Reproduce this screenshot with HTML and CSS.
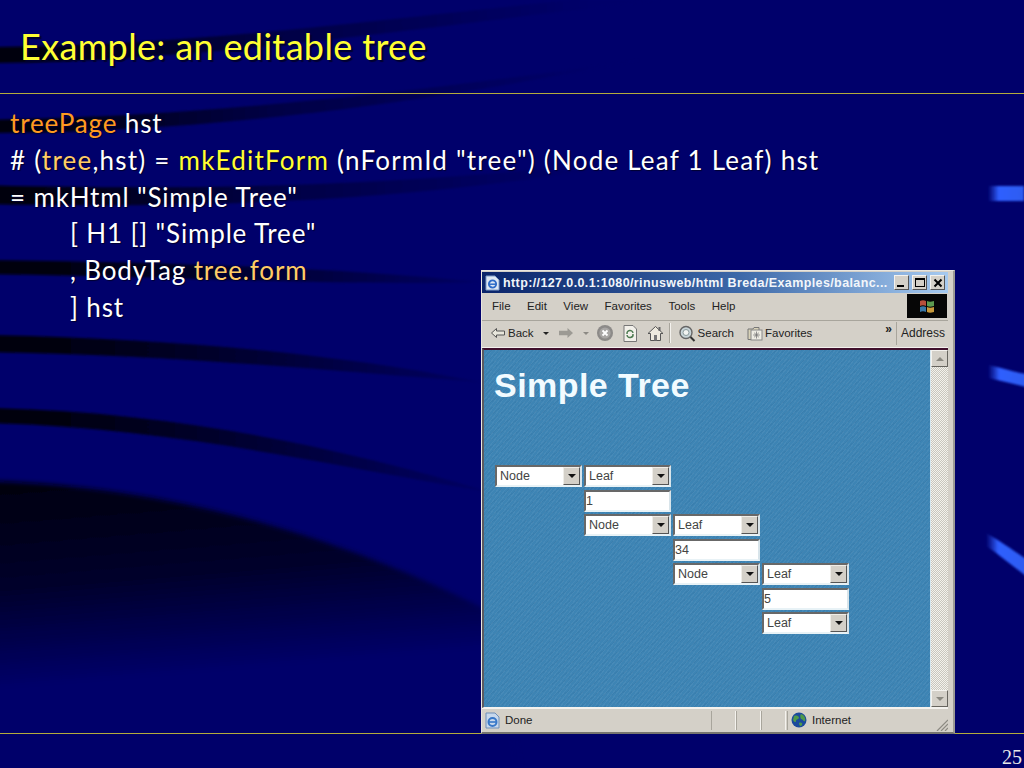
FILE: index.html
```html
<!DOCTYPE html>
<html lang="en">
<head>
<meta charset="utf-8">
<title>Example: an editable tree</title>
<link rel="stylesheet" href="styles.css">
</head>
<body>
<div class="slide">
  <svg class="backdrop" width="1024" height="768" viewBox="0 0 1024 768" aria-hidden="true">
    <defs>
      <linearGradient id="fade" gradientUnits="userSpaceOnUse" x1="0" y1="0" x2="520" y2="0">
        <stop offset="0" stop-color="#000008"/>
        <stop offset="0.1" stop-color="#00000e"/>
        <stop offset="0.5" stop-color="#000034"/>
        <stop offset="1" stop-color="#00006b"/>
      </linearGradient>
      <linearGradient id="fadeLong" gradientUnits="userSpaceOnUse" x1="0" y1="0" x2="600" y2="0">
        <stop offset="0" stop-color="#000008"/>
        <stop offset="0.08" stop-color="#000012"/>
        <stop offset="0.45" stop-color="#000044"/>
        <stop offset="1" stop-color="#00006b"/>
      </linearGradient>
      <linearGradient id="fadeBig" gradientUnits="userSpaceOnUse" x1="0" y1="490" x2="16.5" y2="690">
        <stop offset="0" stop-color="#000010"/>
        <stop offset="0.5" stop-color="#00002c"/>
        <stop offset="1" stop-color="#00006b"/>
      </linearGradient>
      <linearGradient id="flash" x1="0" y1="0" x2="1" y2="0">
        <stop offset="0" stop-color="#2a55ee" stop-opacity="0"/>
        <stop offset="0.3" stop-color="#2f5fff"/>
        <stop offset="1" stop-color="#2f5cf0"/>
      </linearGradient>
      <filter id="soft" x="-5%" y="-30%" width="110%" height="160%"><feGaussianBlur stdDeviation="1.2"/></filter>
      <filter id="softer" x="-5%" y="-5%" width="110%" height="110%"><feGaussianBlur stdDeviation="2.5"/></filter>
    </defs>
    <path d="M-20 47C170 47 360 22 570 0L660 0C400 30 190 63 -20 63Z" fill="url(#fadeLong)" filter="url(#soft)"/>
    <path d="M-20 120C160 118 360 100 640 60C400 108 180 134 -20 133Z" fill="url(#fadeLong)" filter="url(#soft)"/>
    <path d="M-20 185C170 190 420 190 700 150C440 205 190 208 -20 204Z" fill="url(#fadeLong)" filter="url(#soft)"/>
    <path d="M-20 260C170 262 340 268 480 282C340 286 170 276 -20 274Z" fill="url(#fade)" filter="url(#soft)"/>
    <path d="M-20 335C170 338 340 354 480 382C340 372 170 354 -20 352Z" fill="url(#fade)" filter="url(#soft)"/>
    <path d="M-20 408C170 410 340 448 490 492C340 468 170 426 -20 423Z" fill="url(#fade)" filter="url(#soft)"/>
    <path d="M-20 481C170 484 350 540 490 612L520 768L-20 768Z" fill="url(#fadeBig)" filter="url(#softer)"/>
    <path d="M988 186H1024V201H988Z" fill="url(#flash)" filter="url(#soft)"/>
    <path d="M988 365C1002 368 1014 372 1026 374V387C1014 384 1002 381 988 378Z" fill="url(#flash)" filter="url(#soft)"/>
    <path d="M986 533C1002 542 1014 551 1026 559V576C1012 566 1000 555 986 546Z" fill="url(#flash)" filter="url(#soft)"/>
  </svg>

  <header class="slide-head">
    <h1 class="slide-title">Example: an editable tree</h1>
  </header>

  <main class="code">
    <div class="line"><span class="fn">treePage</span> hst</div>
    <div class="line line-wide"># (<span class="ref">tree</span>,hst) = <span class="call">mkEditForm</span> (nFormId "tree") (Node Leaf 1 Leaf) hst</div>
    <div class="line">= mkHtml "Simple Tree"</div>
    <div class="line indent">[ H1 [] "Simple Tree"</div>
    <div class="line indent">, BodyTag <span class="ref">tree.form</span></div>
    <div class="line indent">] hst</div>
  </main>

  <footer class="slide-foot"><span class="page-no">25</span></footer>

  <section class="browser">
    <div class="titlebar">
      <svg class="ie" width="16" height="16" viewBox="0 0 16 16"><path d="M2 1H11L15 5V15H2Z" fill="#dfe8f4" stroke="#7f9cc8"/><circle cx="8.5" cy="9" r="3.6" fill="none" stroke="#2f6cc8" stroke-width="1.9"/><path d="M4.8 9.2H12.2" stroke="#2f6cc8" stroke-width="1.5"/></svg>
      <span class="title-text">http://127.0.0.1:1080/rinusweb/html Breda/Examples/balanc...</span>
      <span class="caps">
        <span class="cap"><i class="min"></i></span>
        <span class="cap"><i class="max"></i></span>
        <span class="cap cap-close"><svg width="10" height="10" viewBox="0 0 10 10"><path d="M1.5 1.5L8.5 8.5M8.5 1.5L1.5 8.5" stroke="#000" stroke-width="2"/></svg></span>
      </span>
    </div>

    <div class="menubar">
      <span class="menu-items"><span>File</span><span>Edit</span><span>View</span><span>Favorites</span><span>Tools</span><span>Help</span></span>
      <span class="flag"><svg width="18" height="16" viewBox="0 0 18 16"><path d="M2 3C4 2 6 2 8 3V8C6 7 4 7 2 8Z" fill="#b8503c"/><path d="M9 3C11 4 13 4 16 3V8C13 9 11 9 9 8Z" fill="#5c9a50"/><path d="M2 9C4 8 6 8 8 9V14C6 13 4 13 2 14Z" fill="#3a78a8"/><path d="M9 9C11 10 13 10 16 9V14C13 15 11 15 9 14Z" fill="#c89a3c"/></svg></span>
    </div>

    <div class="toolbar">
      <span class="tool tool-back">
        <svg width="16" height="12" viewBox="0 0 16 12"><path d="M6.5 1.5L1.5 6L6.5 10.5V8H14.5V4H6.5Z" fill="#e8e6dc" stroke="#555" stroke-width="1"/></svg>
        <span>Back</span><i class="drop"></i>
      </span>
      <span class="tool tool-fwd">
        <svg width="16" height="12" viewBox="0 0 16 12"><path d="M9.5 1L15 6L9.5 11V8.2H1V3.8H9.5Z" fill="#9c9a94"/></svg>
        <i class="drop drop-off"></i>
      </span>
      <svg class="tool-stop" width="18" height="18" viewBox="0 0 18 18"><circle cx="9" cy="9" r="8" fill="#8c8a88"/><circle cx="9" cy="9" r="5.6" fill="#a8a6a4"/><path d="M6.5 6.5L11.5 11.5M11.5 6.5L6.5 11.5" stroke="#fff" stroke-width="1.8"/></svg>
      <svg class="tool-refresh" width="14" height="17" viewBox="0 0 14 17"><path d="M1 .5H10L13.5 4V16.5H1Z" fill="#f2f0ea" stroke="#777"/><path d="M4 9A3 3 0 0 1 10 8M10 9A3 3 0 0 1 4 10" fill="none" stroke="#4c7a50" stroke-width="1.4"/></svg>
      <svg class="tool-home" width="17" height="17" viewBox="0 0 17 17"><path d="M8.5 1.5L1 8.5H3.5V15.5H13.5V8.5H16Z" fill="#eeeade" stroke="#555"/><rect x="7" y="10" width="3" height="5.5" fill="#777"/><rect x="11.5" y="2" width="2" height="4" fill="#666"/></svg>
      <i class="tool-sep"></i>
      <span class="tool tool-search">
        <svg width="18" height="17" viewBox="0 0 18 17"><circle cx="8" cy="7.5" r="6" fill="#c8d4d8" stroke="#666" stroke-width="1.4"/><circle cx="8" cy="7.5" r="3" fill="#f2f4f2" stroke="#8a9a9c"/><path d="M12.5 12L16.5 16" stroke="#333" stroke-width="2"/></svg>
        <span>Search</span>
      </span>
      <span class="tool tool-fav">
        <svg width="16" height="15" viewBox="0 0 16 15"><path d="M1 3H6L7 1.5H12V13.5H1Z" fill="#d8d2b8" stroke="#777"/><rect x="4" y="4" width="11" height="10" fill="#eeece4" stroke="#888"/><path d="M9.5 5.5V12.5M6.2 9H12.8M7.2 6.8L11.8 11.2M11.8 6.8L7.2 11.2" stroke="#777" stroke-width=".8"/></svg>
        <span>Favorites</span>
      </span>
      <span class="chevron">»</span>
      <span class="address">Address</span>
    </div>

    <div class="viewport">
      <div class="page">
        <h2 class="page-title">Simple Tree</h2>
        <div class="tree">
          <div class="sel c1"><span>Node</span><i class="arrow"></i></div>
          <div class="sel c2"><span>Leaf</span><i class="arrow"></i></div>
          <div class="field c2">1</div>
          <div class="sel c2"><span>Node</span><i class="arrow"></i></div>
          <div class="sel c3"><span>Leaf</span><i class="arrow"></i></div>
          <div class="field c3">34</div>
          <div class="sel c3"><span>Node</span><i class="arrow"></i></div>
          <div class="sel c4"><span>Leaf</span><i class="arrow"></i></div>
          <div class="field c4">5</div>
          <div class="sel c4"><span>Leaf</span><i class="arrow"></i></div>
        </div>
      </div>
      <div class="scrollbar">
        <span class="sb-btn"><i class="tri-up"></i></span>
        <span class="sb-track"></span>
        <span class="sb-btn"><i class="tri-down"></i></span>
      </div>
    </div>

    <div class="statusbar">
      <span class="st-main">
        <svg width="17" height="17" viewBox="0 0 17 17"><path d="M2 1H11L15 5V16H2Z" fill="#c8d8ec" stroke="#6f8fb8"/><circle cx="8.5" cy="10" r="4" fill="none" stroke="#3878c8" stroke-width="2"/><path d="M4.5 10H12.5" stroke="#3878c8" stroke-width="1.6"/></svg>
        <span>Done</span>
      </span>
      <span class="st-cell"></span><span class="st-cell"></span><span class="st-cell"></span>
      <span class="st-zone">
        <svg width="16" height="16" viewBox="0 0 16 16"><circle cx="8" cy="8" r="7.5" fill="#1c4a9c"/><path d="M3 4C6 3 8 4 8 6C7 8 5 7 5 9C5 11 3 10 2 8ZM10 2C13 3 15 6 14 9C12 10 12 7 10 7C9 5 9 3 10 2ZM8 11C10 10 12 11 11 13C10 15 8 14 8 11Z" fill="#4f9a48"/></svg>
        <span>Internet</span>
      </span>
      <svg class="grip" width="13" height="13" viewBox="0 0 13 13"><path d="M2 13L13 2M6 13L13 6M10 13L13 10" stroke="#8c8a82" stroke-width="1.2"/></svg>
    </div>
  </section>
</div>
</body>
</html>
```
FILE: styles.css
```css
* { box-sizing: border-box; }
html, body { margin: 0; padding: 0; }
body { width: 1024px; height: 768px; overflow: hidden; background: #00006b; }

.slide {
  position: relative;
  width: 1024px;
  height: 768px;
  display: flex;
  flex-direction: column;
  overflow: hidden;
  background: #00006b;
  font-family: "Lato", "Noto Sans", sans-serif;
  color: #fff;
}
.backdrop { position: absolute; left: 0; top: 0; }

.slide-head {
  position: relative;
  height: 94px;
  padding: 25px 0 0 20px;
  border-bottom: 1px solid #b4ac3c;
}
.slide-title {
  margin: 0;
  font-size: 36px;
  line-height: 42px;
  font-weight: 400;
  letter-spacing: .35px;
  color: #ffff33;
  text-shadow: 2px 2px 1px #000030;
}

.code {
  position: relative;
  flex: 1;
  padding: 11px 0 0 10px;
  font-size: 26px;
  line-height: 36.8px;
  letter-spacing: .85px;
  text-shadow: 1px 1px 1px #000030;
}
.line { white-space: pre; }
.line-wide { letter-spacing: 1.22px; }
.indent { padding-left: 60px; }
.fn { color: #ff9a1f; }
.ref { color: #ffcc66; }
.call { color: #ffff33; }

.slide-foot {
  position: relative;
  height: 35px;
  flex: none;
  border-top: 1px solid #b4ac3c;
  display: flex;
  justify-content: flex-end;
  padding: 12px 2px 0 0;
}
.page-no {
  font-family: "Liberation Serif", serif;
  font-size: 20px;
  line-height: 22px;
  color: #e8e8e8;
}

.browser {
  position: absolute;
  left: 481px;
  top: 270px;
  width: 474px;
  height: 464px;
  padding: 1px 5px 0 0;
  display: flex;
  flex-direction: column;
  background: #d4d0c8;
  border: 1px solid #e8e6e0;
  border-right: 2px solid #9c9a94;
  border-bottom: 2px solid #77756f;
  font-family: "Liberation Sans", sans-serif;
  font-size: 12px;
  color: #222;
}

.titlebar {
  height: 21px;
  flex: none;
  display: flex;
  align-items: center;
  padding: 0 3px 0 2px;
  background: linear-gradient(90deg, #0a246a 0%, #3c68a8 55%, #a6caf0 100%);
}
.ie { flex: none; margin-right: 3px; }
.title-text {
  flex: 1;
  color: #f2f6fa;
  font-weight: 700;
  font-size: 12.5px;
  letter-spacing: .39px;
  white-space: nowrap;
  overflow: hidden;
}
.caps { display: flex; gap: 3px; flex: none; }
.cap {
  width: 15px;
  height: 15px;
  position: relative;
  display: flex;
  align-items: center;
  justify-content: center;
  background: #d4d0c8;
  border: 1px solid;
  border-color: #f4f2ee #555 #555 #f4f2ee;
}
.min { width: 7px; height: 2px; background: #000; align-self: flex-end; margin-bottom: 2px; margin-right: 3px; }
.max { width: 10px; height: 9px; border: 1px solid #000; border-top-width: 2px; }

.menubar {
  height: 27px;
  flex: none;
  margin-top: 1px;
  padding-bottom: 2px;
  display: flex;
  align-items: center;
  justify-content: space-between;
  border-bottom: 1px solid #a8a59c;
}
.menu-items { display: flex; gap: 16.5px; padding-left: 10px; font-size: 11.5px; }
.flag {
  width: 40px;
  height: 24px;
  margin-right: 1px;
  display: flex;
  align-items: center;
  justify-content: center;
  background: #060606;
}

.toolbar {
  height: 27px;
  flex: none;
  padding: 0 0 2px 8px;
  display: flex;
  align-items: center;
  border-bottom: 1px solid #f4f2ee;
  font-size: 11.5px;
}
.tool { display: flex; align-items: center; gap: 2px; flex: none; }
.drop {
  width: 0;
  height: 0;
  margin-left: 7px;
  border: 3px solid transparent;
  border-top: 3px solid #222;
  border-bottom: 0;
}
.drop-off { border-top-color: #8c8a84; }
.tool-fwd { margin-left: 9px; }
.tool-stop { margin-left: 7px; flex: none; }
.tool-refresh { margin-left: 9px; flex: none; }
.tool-home { margin-left: 10px; flex: none; }
.tool-sep { width: 1px; height: 20px; background: #a8a59c; margin-left: 5px; flex: none; box-shadow: 1px 0 #f4f2ee; }
.tool-search { margin-left: 8px; }
.tool-fav { margin-left: 13px; }
.chevron { margin-left: auto; margin-right: 4px; margin-top: -8px; font-weight: 700; font-size: 12px; }
.address {
  width: 52px;
  flex: none;
  height: 23px;
  padding: 4px 0 0 4px;
  border-left: 1px solid #a8a59c;
  font-size: 12px;
}

.viewport {
  flex: 1;
  min-height: 0;
  display: flex;
  border-top: 2px solid #40102c;
  border-left: 2px solid #5c5a60;
  border-bottom: 1px solid #f4f2ee;
}
.page {
  flex: 1;
  padding: 17px 0 0 11px;
  background-color: #3d84b4;
  background-image:
    repeating-linear-gradient(-52deg, rgba(255,255,255,.05) 0 1px, transparent 1px 3px),
    repeating-linear-gradient(-38deg, rgba(0,30,70,.05) 0 1px, transparent 1px 5px);
}
.page-title {
  margin: 0 0 0 -1px;
  height: 98px;
  font-size: 34px;
  line-height: 36px;
  font-weight: 700;
  color: #f2fbff;
  letter-spacing: .45px;
}
.tree {
  display: grid;
  grid-template-columns: 89px 89px 89px 89px;
  grid-auto-rows: 22px;
  row-gap: 2.5px;
  align-items: stretch;
}
.c1 { grid-column: 1; }
.c2 { grid-column: 2; }
.c3 { grid-column: 3; }
.c4 { grid-column: 4; }
.sel, .field {
  width: 87px;
  background: #fff;
  border: 2px solid;
  border-color: #686868 #d8e4ea #e8f2f6 #686868;
  color: #444;
  font-size: 12.5px;
  line-height: 18px;
  display: flex;
  align-items: center;
}
.sel { padding-left: 3px; justify-content: space-between; }
.field { padding-left: 0; }
.arrow {
  width: 17px;
  height: 18px;
  flex: none;
  position: relative;
  background: #d4d0c8;
  border: 1px solid;
  border-color: #efede8 #555 #555 #efede8;
}
.arrow::after {
  content: "";
  position: absolute;
  left: 4px;
  top: 6px;
  border: 4px solid transparent;
  border-top: 4px solid #111;
  border-bottom: 0;
}

.scrollbar {
  width: 18px;
  flex: none;
  display: flex;
  flex-direction: column;
  border-left: 1px solid #d8e8f0;
  background: #f2f0ea;
}
.sb-btn {
  height: 17px;
  flex: none;
  display: flex;
  align-items: center;
  justify-content: center;
  background: #d4d0c8;
  border: 1px solid;
  border-color: #f4f2ee #66645e #66645e #f4f2ee;
}
.tri-up { border: 4px solid transparent; border-bottom: 4px solid #8a8880; border-top: 0; }
.tri-down { border: 4px solid transparent; border-top: 4px solid #8a8880; border-bottom: 0; }
.sb-track {
  flex: 1;
  background-color: #f4f2ec;
  background-image: conic-gradient(#c8c6be 25%, transparent 0 50%, #c8c6be 0 75%, transparent 0);
  background-size: 2px 2px;
}

.statusbar {
  height: 24px;
  flex: none;
  padding-bottom: 1px;
  display: flex;
  align-items: center;
  font-size: 11.5px;
  border-top: 1px solid #f4f2ee;
}
.st-main { width: 229px; display: flex; align-items: center; gap: 4px; padding-left: 2px; flex: none; }
.st-cell { width: 25px; height: 19px; flex: none; border-left: 1px solid #a8a59c; border-right: 1px solid #f4f2ee; }
.st-zone { display: flex; align-items: center; gap: 5px; margin-left: 1px; padding-left: 3px; flex: 1; border-left: 1px solid #a8a59c; height: 19px; }
.grip { flex: none; align-self: flex-end; }
```
